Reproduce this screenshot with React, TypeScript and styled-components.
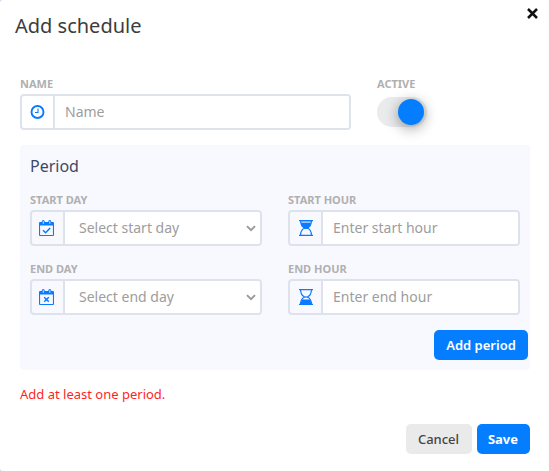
import React from "react";
import styled, { createGlobalStyle } from "styled-components";

const Global = createGlobalStyle`
  *, *::before, *::after { box-sizing: border-box; }
  body { margin: 0; background: #c9dcf2; font-family: "Noto Sans", "Open Sans", sans-serif; }
`;

const Dialog = styled.main`
  display: flex;
  flex-direction: column;
  height: 471px;
  padding: 0 19px 17px 20px;
  background: #fff;
  border-radius: 3px 0 0 3px;
`;

const Header = styled.header`
  display: flex;
  justify-content: space-between;
  height: 76px;
  margin: 0 -10px 0 -5px;
`;

const Title = styled.h1`
  margin: 12px 0 0;
  font-size: 20px;
  line-height: 27px;
  font-weight: 400;
  color: #3c3c3c;
`;

const CloseButton = styled.button`
  align-self: flex-start;
  margin: 7px 1px 0 0;
  padding: 0;
  width: 13px;
  height: 13px;
  border: 0;
  background: none;
  color: #111;
  svg { display: block; }
`;

const NameRow = styled.div`
  display: grid;
  grid-template-columns: 331px 50px;
  column-gap: 26px;
  height: 69px;
`;

const FieldBox = styled.div`
  min-width: 0;
`;

const Label = styled.label`
  display: block;
  height: 18px;
  font-size: 11px;
  line-height: 16px;
  font-weight: 700;
  color: #b0b0b0;
  white-space: nowrap;
`;

const InputGroup = styled.div`
  display: flex;
  height: 36px;
  border: 2px solid #dee2ec;
  border-radius: 4px;
  overflow: hidden;
`;

const Addon = styled.span<{ $inset: number }>`
  display: flex;
  align-items: center;
  flex: 0 0 33px;
  padding-left: ${(p) => p.$inset}px;
  border-right: 2px solid #dee2ec;
  color: #0a7aff;
`;

const Input = styled.input`
  flex: 1;
  min-width: 0;
  padding: 0 10px;
  border: 0;
  outline: 0;
  background: #fff;
  font: 400 14px/20px "Noto Sans", "Open Sans", sans-serif;
  &::placeholder { color: #9d9d9d; opacity: 1; }
`;

const SelectBox = styled.div`
  display: flex;
  align-items: center;
  justify-content: space-between;
  flex: 1;
  padding: 0 4px 0 14px;
  background: #fff;
  font-size: 14px;
  line-height: 20px;
  color: #9d9d9d;
`;

const SwitchTrack = styled.button`
  display: flex;
  justify-content: flex-end;
  align-items: center;
  width: 50px;
  height: 30px;
  margin-top: 3px;
  padding: 0 3px 0 0;
  border: 0;
  border-radius: 15px;
  background: #e9ebec;
`;

const SwitchKnob = styled.span`
  width: 26px;
  height: 26px;
  border-radius: 50%;
  background: #057dff;
  box-shadow: 0 3px 14px rgba(0, 0, 0, 0.4);
`;

const Panel = styled.section`
  height: 225px;
  padding: 10px 2px 0 10px;
  border-radius: 4px;
  background: #f8f9ff;
`;

const PanelTitle = styled.h2`
  margin: 0 0 14px;
  font-size: 16px;
  line-height: 23px;
  font-weight: 400;
  color: #3e4765;
`;

const PeriodGrid = styled.div`
  display: grid;
  grid-template-columns: 232px 232px;
  gap: 15px 26px;
  margin-bottom: 15px;
`;

const Actions = styled.div`
  display: flex;
  justify-content: flex-end;
  gap: 5px;
`;

const Button = styled.button<{ $primary?: boolean; $width: number }>`
  width: ${(p) => p.$width}px;
  height: 30px;
  padding: 0 1px 0 0;
  border: 0;
  border-radius: 5px;
  background: ${(p) => (p.$primary ? "#057dff" : "#eaeaea")};
  color: ${(p) => (p.$primary ? "#fff" : "#454545")};
  font: ${(p) => (p.$primary ? 700 : 500)} 13px/20px "Noto Sans", "Open Sans", sans-serif;
`;

const PeriodButton = styled(Button)`
  padding: 0;
  font-weight: 600;
`;

const ErrorText = styled.p`
  margin: 14px 0 0;
  font-size: 13px;
  line-height: 20px;
  color: #ff1f1f;
`;

const Footer = styled.footer`
  margin-top: auto;
`;

const CloseIcon = () => (
  <svg width="13" height="13" viewBox="0 0 13 13" stroke="currentColor" strokeWidth="2.5">
    <path d="M2 2l9 9M11 2l-9 9" />
  </svg>
);

const ClockIcon = () => (
  <svg width="15" height="16" viewBox="0 0 15 16" fill="none" stroke="currentColor">
    <circle cx="7.5" cy="8" r="6" strokeWidth="1.9" />
    <path d="M8 4.5v4H5" strokeWidth="1.1" />
  </svg>
);

const CalendarIcon = ({ mark }: { mark: string }) => (
  <svg width="15" height="16" viewBox="0 0 15 16" fill="none">
    <path
      fill="currentColor"
      fillRule="evenodd"
      d="M1 2h1.700v-.4a1.500 1.500 0 0 1 3 0V2h3.600v-.4a1.500 1.500 0 0 1 3 0V2H14a1 1 0 0 1 1 1v12a1 1 0 0 1-1 1H1a1 1 0 0 1-1-1V3a1 1 0 0 1 1-1zM1.100 5.500v9.400h12.800V5.500zM3.800 1.300v2.400h.9V1.300zM10.400 1.300v2.400h.9V1.300z"
    />
    <path d={mark} stroke="currentColor" strokeWidth="1.5" />
  </svg>
);

const HourglassIcon = ({ filled }: { filled: "top" | "bottom" }) => (
  <svg width="14" height="16" viewBox="0 0 14 16" fill="none" stroke="currentColor">
    <path d="M0 .6h14M0 15.4h14" strokeWidth="1.2" />
    <path d="M1.600 1c0 4 1.700 5.800 4 7-2.300 1.200-4 3-4 7M12.400 1c0 4-1.700 5.800-4 7 2.300 1.200 4 3 4 7" strokeWidth="1.200" />
    {filled === "top" ? (
      <>
        <path d="M2 1h10v2H2z" fill="currentColor" fillOpacity="0.4" stroke="none" />
        <path d="M2 3h10C11.600 6 10 7.500 8.400 9H5.600C4 7.500 2.400 6 2 3z" fill="currentColor" stroke="none" />
      </>
    ) : (
      <path d="M1.600 15C1.800 12.800 2.400 11.600 3.400 10.400h7.200c1 1.200 1.600 2.400 1.800 4.600zM5.800 7.500h2.400v1H5.800z" fill="currentColor" stroke="none" />
    )}
  </svg>
);

const ChevronIcon = () => (
  <svg width="10" height="7" viewBox="0 0 10 7" fill="none" stroke="#999" strokeWidth="1.9">
    <path d="M1 1.200l4 4 4-4" />
  </svg>
);

type FieldProps = {
  label: string;
  icon: React.ReactNode;
  inset: number;
  placeholder: string;
  select?: boolean;
};

const Field = ({ label, icon, inset, placeholder, select }: FieldProps) => (
  <FieldBox>
    <Label>{label}</Label>
    <InputGroup>
      <Addon $inset={inset}>{icon}</Addon>
      {select ? (
        <SelectBox role="combobox" aria-label={label} tabIndex={0}>
          {placeholder}
          <ChevronIcon />
        </SelectBox>
      ) : (
        <Input aria-label={label} placeholder={placeholder} />
      )}
    </InputGroup>
  </FieldBox>
);

export default function App() {
  return (
    <>
      <Global />
      <Dialog>
        <Header>
          <Title>Add schedule</Title>
          <CloseButton aria-label="Close"><CloseIcon /></CloseButton>
        </Header>
        <NameRow>
          <Field label="NAME" inset={8} icon={<ClockIcon />} placeholder="Name" />
          <FieldBox>
            <Label>ACTIVE</Label>
            <SwitchTrack role="switch" aria-checked="true" aria-label="Active">
              <SwitchKnob />
            </SwitchTrack>
          </FieldBox>
        </NameRow>
        <Panel>
          <PanelTitle>Period</PanelTitle>
          <PeriodGrid>
            <Field select label="START DAY" inset={7} icon={<CalendarIcon mark="M4 10.300l2.600 2.500 4.600-4.900" />} placeholder="Select start day" />
            <Field label="START HOUR" inset={9} icon={<HourglassIcon filled="top" />} placeholder="Enter start hour" />
            <Field select label="END DAY" inset={7} icon={<CalendarIcon mark="M5.200 8.200l4.600 4.600M9.800 8.200l-4.600 4.600" />} placeholder="Select end day" />
            <Field label="END HOUR" inset={9} icon={<HourglassIcon filled="bottom" />} placeholder="Enter end hour" />
          </PeriodGrid>
          <Actions>
            <PeriodButton $primary $width={94}>Add period</PeriodButton>
          </Actions>
        </Panel>
        <ErrorText>Add at least one period.</ErrorText>
        <Footer>
          <Actions>
            <Button $width={66}>Cancel</Button>
            <Button $primary $width={53}>Save</Button>
          </Actions>
        </Footer>
      </Dialog>
    </>
  );
}
